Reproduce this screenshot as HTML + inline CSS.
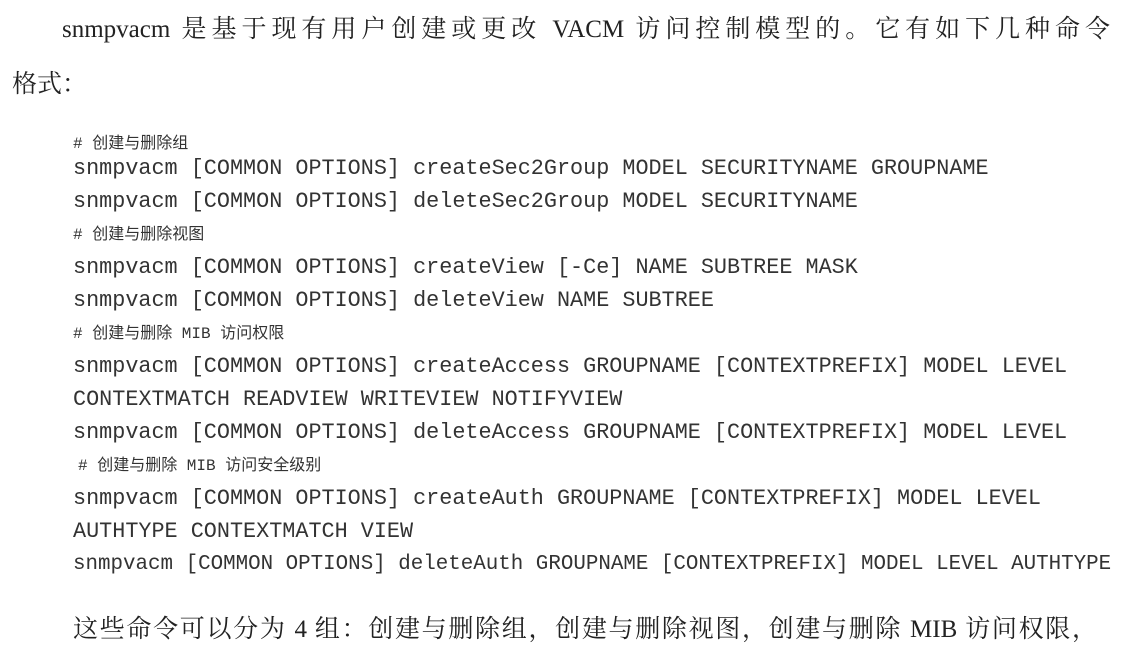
<!DOCTYPE html>
<html><head><meta charset="utf-8"><style>
body{margin:0;width:1138px;height:649px;background:#fff;overflow:hidden;position:relative;color:#2a2a2a}
.l{position:absolute;white-space:pre;line-height:30px;height:30px}
.t{font-family:"Liberation Serif","Noto Serif CJK SC",serif;font-size:25px;color:#222}
.j{text-align:justify;text-align-last:justify;white-space:normal}
.c{font-family:"Liberation Mono","Noto Sans CJK SC",monospace;font-size:21.8px;left:73px;color:#333}
.m{font-family:"Liberation Mono","Noto Sans CJK SC",monospace;font-size:16px;left:73px;color:#333}
</style></head><body>
<div class="l t j" style="left:62px;width:1048px;top:15px">snmpvacm 是基于现有用户创建或更改 VACM 访问控制模型的。它有如下几种命令</div>
<div class="l t" style="left:12px;top:70px">格式：</div>
<div class="l m" style="top:129px"># 创建与删除组</div>
<div class="l c" style="top:154px">snmpvacm [COMMON OPTIONS] createSec2Group MODEL SECURITYNAME GROUPNAME</div>
<div class="l c" style="top:187px">snmpvacm [COMMON OPTIONS] deleteSec2Group MODEL SECURITYNAME</div>
<div class="l m" style="top:220px"># 创建与删除视图</div>
<div class="l c" style="top:253px">snmpvacm [COMMON OPTIONS] createView [-Ce] NAME SUBTREE MASK</div>
<div class="l c" style="top:286px">snmpvacm [COMMON OPTIONS] deleteView NAME SUBTREE</div>
<div class="l m" style="top:319px"># 创建与删除 MIB 访问权限</div>
<div class="l c" style="top:352px">snmpvacm [COMMON OPTIONS] createAccess GROUPNAME [CONTEXTPREFIX] MODEL LEVEL</div>
<div class="l c" style="top:385px">CONTEXTMATCH READVIEW WRITEVIEW NOTIFYVIEW</div>
<div class="l c" style="top:418px">snmpvacm [COMMON OPTIONS] deleteAccess GROUPNAME [CONTEXTPREFIX] MODEL LEVEL</div>
<div class="l m" style="top:451px;left:78px"># 创建与删除 MIB 访问安全级别</div>
<div class="l c" style="top:484px">snmpvacm [COMMON OPTIONS] createAuth GROUPNAME [CONTEXTPREFIX] MODEL LEVEL</div>
<div class="l c" style="top:517px">AUTHTYPE CONTEXTMATCH VIEW</div>
<div class="l c" style="top:550px;font-size:20.85px">snmpvacm [COMMON OPTIONS] deleteAuth GROUPNAME [CONTEXTPREFIX] MODEL LEVEL AUTHTYPE</div>
<div class="l t j" style="left:73px;width:1024px;top:615px">这些命令可以分为 4 组：创建与删除组，创建与删除视图，创建与删除 MIB 访问权限，</div>
</body></html>
